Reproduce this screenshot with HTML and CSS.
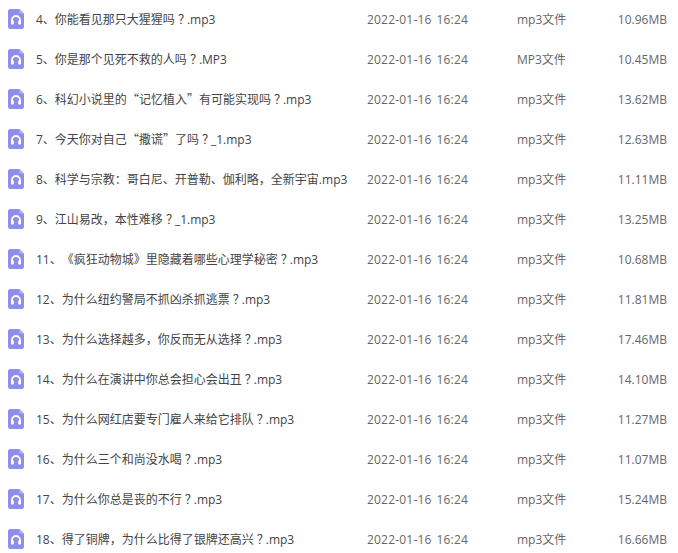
FILE: index.html
```html
<!DOCTYPE html>
<html lang="zh-CN">
<head>
<meta charset="utf-8">
<title>文件列表</title>
<link rel="stylesheet" href="styles.css">
</head>
<body>
<svg class="defs" width="0" height="0" aria-hidden="true">
  <symbol id="audio" viewBox="0 0 16 20">
    <path d="M2.500 0H11.500L16 4.500V17.500A2.500 2.500 0 0 1 13.500 20H2.500A2.500 2.500 0 0 1 0 17.500V2.500A2.500 2.500 0 0 1 2.500 0Z" fill="#918dec"/>
    <path d="M11.500 0L16 4.500H13A1.500 1.500 0 0 1 11.500 3Z" fill="#b4b1f2"/>
    <path d="M4 13.500V11A4 4 0 0 1 12 11V13.500" fill="none" stroke="#fff" stroke-width="1.800"/>
    <rect x="3" y="11.500" width="2.800" height="4" rx="1" fill="#fff"/>
    <rect x="10.200" y="11.500" width="2.800" height="4" rx="1" fill="#fff"/>
  </symbol>
</svg>
<main class="list">
  <div class="row"><svg class="icon"><use href="#audio"/></svg><span class="name">4、你能看见那只大猩猩吗<span class="q">？</span>.mp3</span><span class="date">2022-01-16 16:24</span><span class="type">mp3文件</span><span class="size">10.96MB</span></div>
  <div class="row"><svg class="icon"><use href="#audio"/></svg><span class="name">5、你是那个见死不救的人吗<span class="q">？</span>.MP3</span><span class="date">2022-01-16 16:24</span><span class="type">MP3文件</span><span class="size">10.45MB</span></div>
  <div class="row"><svg class="icon"><use href="#audio"/></svg><span class="name">6、科幻小说里的<span class="p">“</span>记忆植入<span class="p">”</span>有可能实现吗<span class="q">？</span>.mp3</span><span class="date">2022-01-16 16:24</span><span class="type">mp3文件</span><span class="size">13.62MB</span></div>
  <div class="row"><svg class="icon"><use href="#audio"/></svg><span class="name">7、今天你对自己<span class="p">“</span>撒谎<span class="p">”</span>了吗<span class="q">？</span>_1.mp3</span><span class="date">2022-01-16 16:24</span><span class="type">mp3文件</span><span class="size">12.63MB</span></div>
  <div class="row"><svg class="icon"><use href="#audio"/></svg><span class="name">8、科学与宗教：哥白尼、开普勒、伽利略，全新宇宙.mp3</span><span class="date">2022-01-16 16:24</span><span class="type">mp3文件</span><span class="size">11.11MB</span></div>
  <div class="row"><svg class="icon"><use href="#audio"/></svg><span class="name">9、江山易改，本性难移<span class="q">？</span>_1.mp3</span><span class="date">2022-01-16 16:24</span><span class="type">mp3文件</span><span class="size">13.25MB</span></div>
  <div class="row"><svg class="icon"><use href="#audio"/></svg><span class="name">11、《疯狂动物城》里隐藏着哪些心理学秘密<span class="q">？</span>.mp3</span><span class="date">2022-01-16 16:24</span><span class="type">mp3文件</span><span class="size">10.68MB</span></div>
  <div class="row"><svg class="icon"><use href="#audio"/></svg><span class="name">12、为什么纽约警局不抓凶杀抓逃票<span class="q">？</span>.mp3</span><span class="date">2022-01-16 16:24</span><span class="type">mp3文件</span><span class="size">11.81MB</span></div>
  <div class="row"><svg class="icon"><use href="#audio"/></svg><span class="name">13、为什么选择越多，你反而无从选择<span class="q">？</span>.mp3</span><span class="date">2022-01-16 16:24</span><span class="type">mp3文件</span><span class="size">17.46MB</span></div>
  <div class="row"><svg class="icon"><use href="#audio"/></svg><span class="name">14、为什么在演讲中你总会担心会出丑<span class="q">？</span>.mp3</span><span class="date">2022-01-16 16:24</span><span class="type">mp3文件</span><span class="size">14.10MB</span></div>
  <div class="row"><svg class="icon"><use href="#audio"/></svg><span class="name">15、为什么网红店要专门雇人来给它排队<span class="q">？</span>.mp3</span><span class="date">2022-01-16 16:24</span><span class="type">mp3文件</span><span class="size">11.27MB</span></div>
  <div class="row"><svg class="icon"><use href="#audio"/></svg><span class="name">16、为什么三个和尚没水喝<span class="q">？</span>.mp3</span><span class="date">2022-01-16 16:24</span><span class="type">mp3文件</span><span class="size">11.07MB</span></div>
  <div class="row"><svg class="icon"><use href="#audio"/></svg><span class="name">17、为什么你总是丧的不行<span class="q">？</span>.mp3</span><span class="date">2022-01-16 16:24</span><span class="type">mp3文件</span><span class="size">15.24MB</span></div>
  <div class="row"><svg class="icon"><use href="#audio"/></svg><span class="name">18、得了铜牌，为什么比得了银牌还高兴<span class="q">？</span>.mp3</span><span class="date">2022-01-16 16:24</span><span class="type">mp3文件</span><span class="size">16.66MB</span></div>
</main>
</body>
</html>
```

FILE: styles.css
```css
html, body {
  margin: 0;
  padding: 0;
  background: #fff;
  overflow: hidden;
}
body {
  height: 553px;
  font-family: "Open Sans", "Noto Sans CJK SC", sans-serif;
  font-size: 12px;
  text-spacing-trim: space-all;
}
.defs {
  display: block;
  height: 0;
}
.row {
  display: grid;
  grid-template-columns: 16px 343px 150px 1fr auto;
  align-items: center;
  height: 40px;
  padding: 0 11px 2px 8px;
  box-sizing: border-box;
}
.icon {
  width: 16px;
  height: 20px;
}
.name {
  padding-left: 12px;
  color: #444;
  white-space: nowrap;
}
.p {
  font-family: "Noto Sans CJK JP", sans-serif;
}
.q {
  margin-left: 3px;
  letter-spacing: -3px;
}
.date, .type, .size {
  color: #666;
  white-space: nowrap;
}
.date {
  letter-spacing: 0.2px;
  word-spacing: 1.500px;
}
```
